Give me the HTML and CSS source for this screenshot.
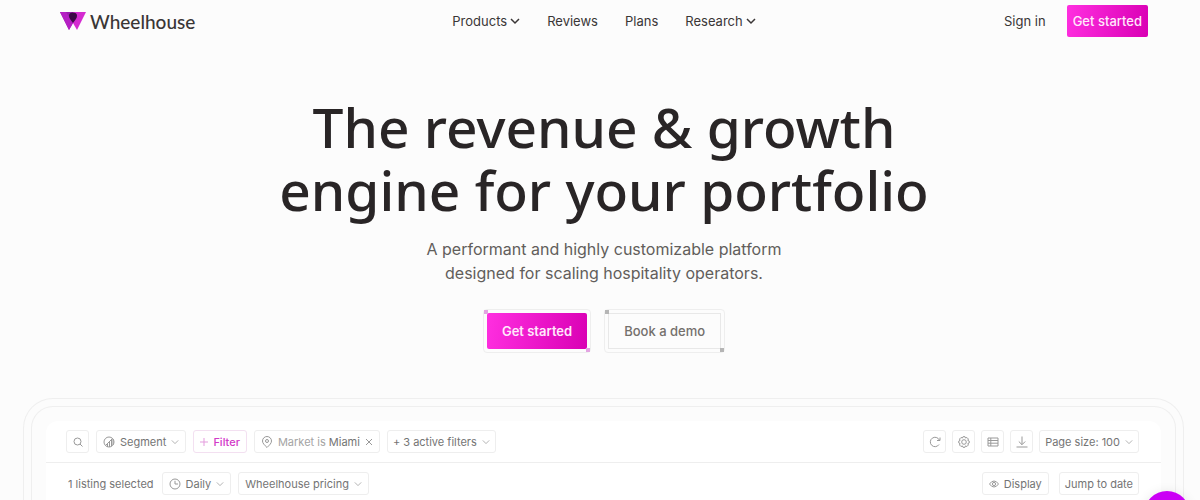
FILE: index.html
```html
<!DOCTYPE html>
<html lang="en">
<head>
<meta charset="utf-8">
<meta name="viewport" content="width=device-width, initial-scale=1">
<title>Wheelhouse</title>
<link rel="stylesheet" href="styles.css">
</head>
<body>
<svg class="sprite" aria-hidden="true">
  <symbol id="chevron" viewBox="0 0 10 10"><path d="M1 3 5 7l4-4"/></symbol>
</svg>
<div class="page">
  <header class="header">
    <a class="brand" href="#">
      <svg class="logo" viewBox="0 0 26 18" aria-hidden="true">
        <path fill="#9b1bb0" d="M0 0h13v11l-4 7z"/>
        <path fill="#d42bd0" d="M13 0h13l-9 18-4-7z"/>
        <path fill="#b51fc4" d="M0 0h6l7 11-4 7z"/>
        <path fill="#3b0a45" d="M13 11C10.500 8 9 6 9 3.800 9 1.500 10.700.500 13 .500s4 1 4 3.300C17 6 15.500 8 13 11z"/>
      </svg>
      <span>Wheelhouse</span>
    </a>
    <nav class="nav">
      <button class="nav-item" type="button">Products <svg class="chev"><use href="#chevron"/></svg></button>
      <a class="nav-item" href="#">Reviews</a>
      <a class="nav-item" href="#">Plans</a>
      <button class="nav-item" type="button">Research <svg class="chev"><use href="#chevron"/></svg></button>
    </nav>
    <div class="account">
      <a class="nav-item" href="#">Sign in</a>
      <button class="primary small" type="button">Get started</button>
    </div>
  </header>

  <main>
    <section class="hero">
      <h1>The revenue &amp; growth<br>engine for your portfolio</h1>
      <p>A performant and highly customizable platform<br>designed for scaling hospitality operators.</p>
      <div class="actions">
        <div class="frame pink"><button class="primary" type="button">Get started</button></div>
        <div class="frame"><button class="secondary" type="button">Book a demo</button></div>
      </div>
    </section>

    <section class="ring outer">
      <div class="ring inner">
        <div class="panel">
          <div class="toolbar first">
            <div class="group">
              <button class="tool square" type="button" aria-label="Search"><svg class="icon" viewBox="0 0 12 12"><circle cx="5.500" cy="5.500" r="3.500"/><path d="m8 8 2.500 2.500"/></svg></button>
              <button class="tool" type="button"><svg class="icon" viewBox="0 0 12 12"><circle cx="6" cy="6" r="5"/><path d="M2.500 9.500 9.500 2.500M4.500 7.500V11M6.500 5.500V11M8.500 3.500V10M10 3v6"/></svg>Segment<svg class="chev"><use href="#chevron"/></svg></button>
              <button class="tool filter" type="button"><svg class="plus" viewBox="0 0 8 8"><path d="M4 0v8M0 4h8"/></svg>Filter</button>
              <button class="tool" type="button"><svg class="icon" viewBox="0 0 12 12"><path d="M6 11.500C3.500 9 1.500 7.300 1.500 5a4.500 4.500 0 0 1 9 0c0 2.300-2 4-4.500 6.500z"/><circle cx="6" cy="5" r="1.500"/></svg><span><span class="light">Market is</span> Miami</span><svg class="close" viewBox="0 0 8 8"><path d="m1 1 6 6M7 1 1 7"/></svg></button>
              <button class="tool tight" type="button">+ 3 active filters<svg class="chev"><use href="#chevron"/></svg></button>
            </div>
            <div class="group close-set">
              <button class="tool square" type="button" aria-label="Refresh"><svg class="icon" viewBox="0 0 12 12"><path d="M10 8.500a4.700 4.700 0 1 1 .300-4.500M11 1.500v3H8"/></svg></button>
              <button class="tool square" type="button" aria-label="Settings"><svg class="icon" viewBox="0 0 12 12"><path d="M5 .700h2l.500 1.300 1.400-.500 1.500 1.500-.600 1.400 1.400.600v2l-1.400.600.600 1.400-1.500 1.500-1.400-.600-.500 1.400H5l-.600-1.400-1.400.600L1.500 9l.600-1.400L.800 7V5l1.300-.600L1.500 3 3 1.500l1.400.500z"/><circle cx="6" cy="6" r="2.300"/></svg></button>
              <button class="tool square" type="button" aria-label="Table"><svg class="icon" viewBox="0 0 12 12"><path d="M1 2h10v8H1zM1 4.500h10M1 7.200h10M3.800 2v8"/></svg></button>
              <button class="tool square" type="button" aria-label="Download"><svg class="icon" viewBox="0 0 12 12"><path d="M6 .500v8M2.800 5.500 6 8.700l3.200-3.200M.500 11h11"/></svg></button>
              <button class="tool tight" type="button">Page size: 100<svg class="chev"><use href="#chevron"/></svg></button>
            </div>
          </div>
          <div class="toolbar">
            <div class="group">
              <span class="count">1 listing selected</span>
              <button class="tool" type="button"><svg class="icon" viewBox="0 0 12 12"><circle cx="6" cy="6" r="5"/><path d="M6 2.800V6h3"/></svg>Daily<svg class="chev"><use href="#chevron"/></svg></button>
              <button class="tool" type="button">Wheelhouse pricing<svg class="chev"><use href="#chevron"/></svg></button>
            </div>
            <div class="group wide">
              <button class="tool" type="button"><svg class="eye" viewBox="0 0 10 10"><path d="M.500 5Q2.500 2 5 2t4.500 3Q7.500 8 5 8T.500 5z"/><circle cx="5" cy="5" r="1.600"/></svg>Display</button>
              <button class="tool tight" type="button">Jump to date</button>
            </div>
          </div>
        </div>
      </div>
    </section>
  </main>
</div>
<button class="chat" type="button" aria-label="Open chat"></button>
</body>
</html>
```
FILE: styles.css
```css
* { box-sizing: border-box; }
body {
  margin: 0;
  background: #fcfcfc;
  color: #3a3636;
  font-family: Inter, "Liberation Sans", sans-serif;
}
button { font: inherit; color: inherit; background: none; border: 0; padding: 0; cursor: pointer; }
a { color: inherit; text-decoration: none; }
svg { fill: none; stroke: currentColor; flex: none; }
.sprite { display: none; }
.page { height: 100vh; overflow: hidden; padding-left: 8px; }

.header {
  display: grid;
  grid-template-columns: 1fr auto 1fr;
  align-items: center;
  height: 42px;
  padding: 0 52px;
}
.brand {
  display: flex;
  align-items: center;
  gap: 4px;
  font-family: Lato, sans-serif;
  font-size: 19px;
  font-weight: 500;
}
.logo { width: 26px; height: 18px; stroke: none; }
.nav { display: flex; gap: 27px; }
.nav-item { display: flex; align-items: center; gap: 3px; font-size: 13px; line-height: 20px; }
.chev { width: 8px; height: 8px; }
.nav .chev { width: 10px; height: 10px; stroke-width: 1.5; }
.account { display: flex; justify-content: flex-end; align-items: center; gap: 21px; }
.primary {
  height: 36px;
  padding: 0 15px;
  border-radius: 2px;
  background: linear-gradient(100deg, #ff2fe0, #d900b4);
  color: #ffe9fb;
  font-size: 13px;
  font-weight: 600;
}
.primary.small { height: 32px; padding: 0 6px; font-weight: 500; }

.hero { text-align: center; padding-top: 53px; }
h1 {
  margin: 0;
  color: #292526;
  font-family: "Noto Sans", sans-serif;
  font-size: 55px;
  line-height: 63px;
  font-weight: 500;
}
.hero p { margin: 16px 0 24px; color: #625e5b; font-size: 16px; line-height: 24px; }
.actions { display: flex; justify-content: center; gap: 13px; }
.frame {
  position: relative;
  padding: 3px;
  border: 1px solid #eeeeee;
  border-radius: 4px;
  color: #b5b5b5;
}
.frame.pink { color: #e3a4e2; }
.frame::before, .frame::after {
  content: "";
  position: absolute;
  width: 4px;
  height: 4px;
  background: currentColor;
}
.frame::before { left: 0; top: 0; }
.frame::after { right: 0; bottom: 0; }
.secondary {
  height: 36px;
  padding: 0 15px;
  border: 1px solid #e8e8e8;
  color: #74706c;
  font-size: 13px;
  font-weight: 500;
}

.ring { border: 1px solid #efefef; border-bottom: 0; }
.outer { margin: 45px 16px 0 15px; padding: 7px 7px 0; border-radius: 30px 30px 0 0; }
.inner { padding: 14px 14px 0; border-radius: 22px 22px 0 0; }
.panel { min-height: 240px; background: #fff; border-radius: 12px 12px 0 0; color: #747474; font-size: 11px; }
.toolbar { display: flex; justify-content: space-between; align-items: center; padding: 9px 22px 0 20px; }
.toolbar.first { padding-bottom: 9px; border-bottom: 1px solid #eeeeee; }
.group { display: flex; align-items: center; gap: 7px; }
.group.close-set { gap: 6px; }
.group.wide { gap: 10px; }
.tool {
  display: flex;
  align-items: center;
  justify-content: center;
  gap: 5px;
  height: 23px;
  padding: 0 6px;
  border: 1px solid #eeeeee;
  border-radius: 3px;
}
.tool.square { width: 23px; padding: 0; }
.tool.tight { padding: 0 5px; }
.tool .icon { width: 12px; height: 12px; stroke: #999999; stroke-width: 1; }
.tool .chev { stroke: #a0a0a0; }
.filter { border-color: #f3e0f1; color: #d23ac8; font-weight: 500; }
.plus { width: 8px; height: 8px; stroke: #e39bdd; }
.close { width: 8px; height: 8px; stroke: #999999; }
.eye { width: 10px; height: 10px; stroke: #999999; }
.light { color: #a4a4a4; }
.count { padding: 0 1px 0 2px; }
.chat {
  position: fixed;
  right: 10px;
  bottom: -37px;
  width: 46px;
  height: 46px;
  border-radius: 50%;
  background: #cb00f5;
  box-shadow: 0 1px 12px rgba(0, 0, 0, 0.1);
}
```
